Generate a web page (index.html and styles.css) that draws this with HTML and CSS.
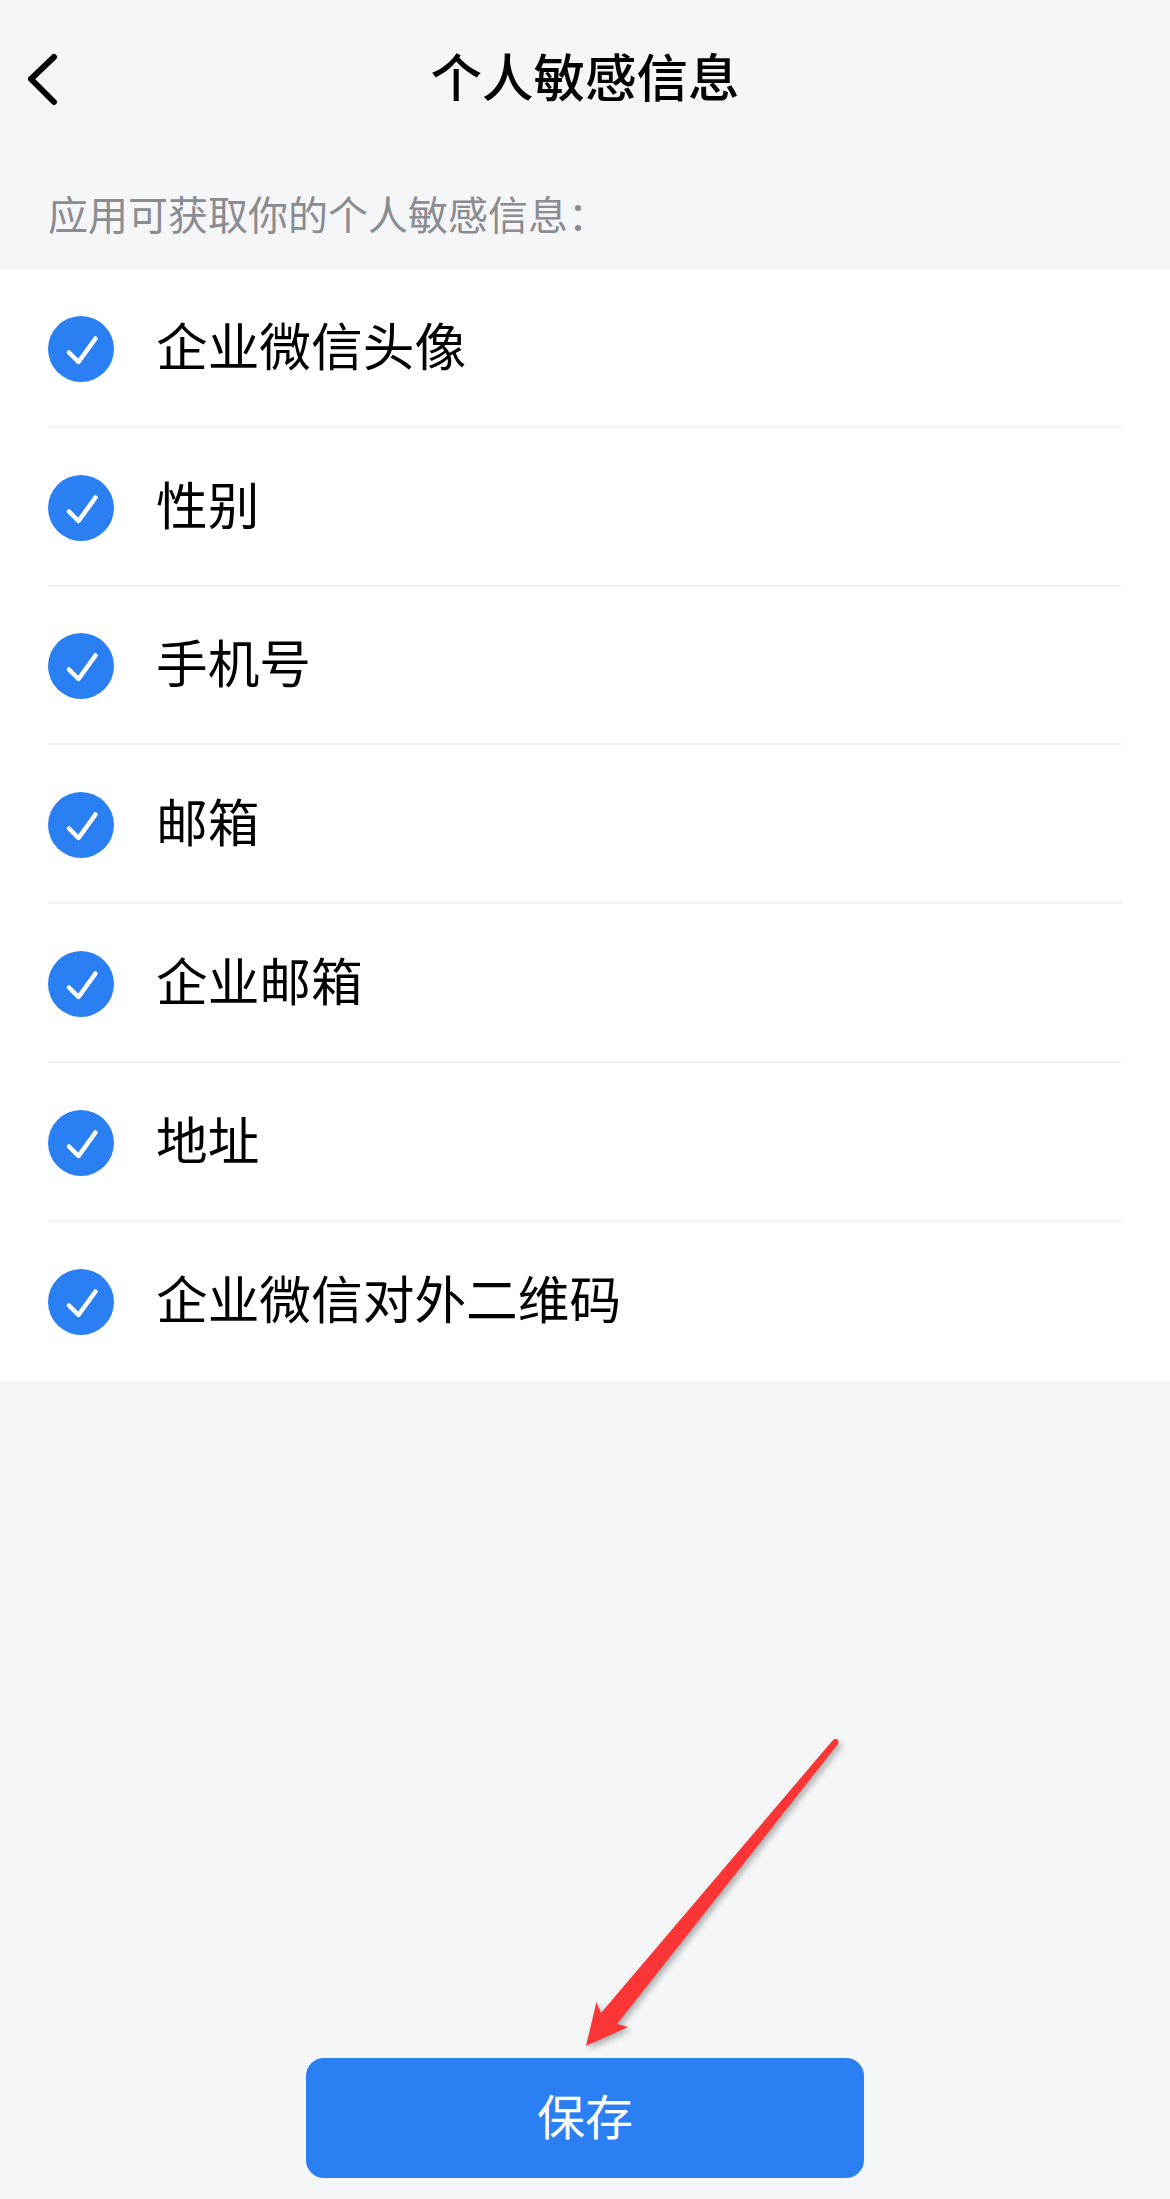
FILE: index.html
```html
<!DOCTYPE html>
<html lang="zh-CN">
<head>
    <meta charset="UTF-8">
    <meta name="viewport" content="width=device-width, initial-scale=1.0">
    <title>个人敏感信息</title>
    <link rel="stylesheet" href="styles.css">
</head>
<body>
    <div class="page">
        <header class="topbar">
            <svg class="back" width="36" height="54" viewBox="0 0 36 54">
                <path d="M30 5 L7 27 L30 50" fill="none" stroke="#000" stroke-width="6" stroke-linecap="round" stroke-linejoin="round"/>
            </svg>
            <h1 class="title">个人敏感信息</h1>
        </header>

        <p class="hint">应用可获取你的个人敏感信息：</p>

        <ul class="list">
            <li class="row">
                <svg class="check" width="66" height="66" viewBox="0 0 66 66"><circle cx="33" cy="33" r="33" fill="#2a7ff2"/><path d="M21 36.500 L30.500 46 L47.500 22.500" fill="none" stroke="#fff" stroke-width="4.500" stroke-linecap="round" stroke-linejoin="round"/></svg>
                <span class="label">企业微信头像</span>
            </li>
            <li class="row">
                <svg class="check" width="66" height="66" viewBox="0 0 66 66"><circle cx="33" cy="33" r="33" fill="#2a7ff2"/><path d="M21 36.500 L30.500 46 L47.500 22.500" fill="none" stroke="#fff" stroke-width="4.500" stroke-linecap="round" stroke-linejoin="round"/></svg>
                <span class="label">性别</span>
            </li>
            <li class="row">
                <svg class="check" width="66" height="66" viewBox="0 0 66 66"><circle cx="33" cy="33" r="33" fill="#2a7ff2"/><path d="M21 36.500 L30.500 46 L47.500 22.500" fill="none" stroke="#fff" stroke-width="4.500" stroke-linecap="round" stroke-linejoin="round"/></svg>
                <span class="label">手机号</span>
            </li>
            <li class="row">
                <svg class="check" width="66" height="66" viewBox="0 0 66 66"><circle cx="33" cy="33" r="33" fill="#2a7ff2"/><path d="M21 36.500 L30.500 46 L47.500 22.500" fill="none" stroke="#fff" stroke-width="4.500" stroke-linecap="round" stroke-linejoin="round"/></svg>
                <span class="label">邮箱</span>
            </li>
            <li class="row">
                <svg class="check" width="66" height="66" viewBox="0 0 66 66"><circle cx="33" cy="33" r="33" fill="#2a7ff2"/><path d="M21 36.500 L30.500 46 L47.500 22.500" fill="none" stroke="#fff" stroke-width="4.500" stroke-linecap="round" stroke-linejoin="round"/></svg>
                <span class="label">企业邮箱</span>
            </li>
            <li class="row">
                <svg class="check" width="66" height="66" viewBox="0 0 66 66"><circle cx="33" cy="33" r="33" fill="#2a7ff2"/><path d="M21 36.500 L30.500 46 L47.500 22.500" fill="none" stroke="#fff" stroke-width="4.500" stroke-linecap="round" stroke-linejoin="round"/></svg>
                <span class="label">地址</span>
            </li>
            <li class="row">
                <svg class="check" width="66" height="66" viewBox="0 0 66 66"><circle cx="33" cy="33" r="33" fill="#2a7ff2"/><path d="M21 36.500 L30.500 46 L47.500 22.500" fill="none" stroke="#fff" stroke-width="4.500" stroke-linecap="round" stroke-linejoin="round"/></svg>
                <span class="label">企业微信对外二维码</span>
            </li>
        </ul>

        <div class="footer">
            <button type="button" class="save">保存</button>
        </div>

        <!-- red annotation arrow drawn on top of the screenshot -->
        <svg class="arrow" width="270" height="320" viewBox="0 0 270 320">
            <path d="M253 5 Q256 3 258 5 Q259 7 258 9 L37 289 L48 292 L6 311 L16.500 267 L21 278 Z" fill="#f93535"/>
        </svg>
    </div>
</body>
</html>
```

FILE: styles.css
```css
* {
    box-sizing: border-box;
}

body {
    margin: 0;
    background-color: #f5f6f8;
    font-family: "Liberation Sans", "Noto Sans CJK SC", sans-serif;
}

.page {
    position: relative;
    display: flex;
    flex-direction: column;
    height: 2199px;
}

.topbar {
    display: flex;
    justify-content: center;
    align-items: center;
    position: relative;
    height: 154px;
    padding-top: 4px;
}

.back {
    position: absolute;
    left: 24px;
    top: 52px;
}

.title {
    margin: 0;
    font-size: 51.5px;
    font-weight: 500;
    line-height: 64px;
    color: #000;
}

.hint {
    margin: 0;
    padding: 39px 48px 30px;
    font-size: 40px;
    line-height: 46px;
    color: #8a8c91;
}

.list {
    margin: 0;
    padding: 0 48px;
    list-style: none;
    background-color: #fff;
}

.row {
    display: flex;
    align-items: center;
    gap: 42px;
    height: 158.8px;
    padding-top: 3px;
    font-size: 51.7px;
    color: #000;
    border-bottom: 2px solid #f0f1f2;
}

.row:last-child {
    border-bottom-color: transparent;
}

.check {
    flex-shrink: 0;
}

.label {
    padding-bottom: 11px;
}

.footer {
    display: flex;
    justify-content: center;
    margin-top: auto;
    padding-bottom: 21px;
}

.save {
    width: 558px;
    height: 120px;
    padding: 0 0 8px;
    border: 0;
    border-radius: 18px;
    background-color: #2a7ff2;
    color: #fff;
    font-family: inherit;
    font-size: 48px;
}

.arrow {
    position: absolute;
    left: 580px;
    top: 1735px;
    filter: drop-shadow(3px 3px 3px rgba(0, 0, 0, 0.3));
}
```
